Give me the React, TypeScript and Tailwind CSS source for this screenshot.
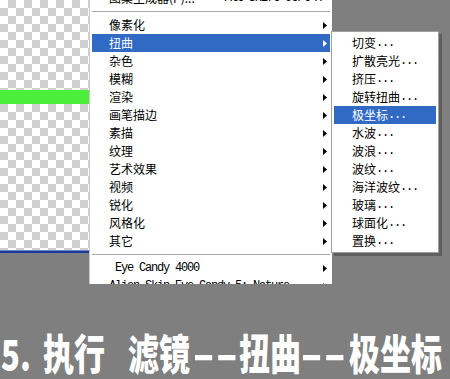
import React from "react"

const mainItems = [
  "像素化",
  "扭曲",
  "杂色",
  "模糊",
  "渲染",
  "画笔描边",
  "素描",
  "纹理",
  "艺术效果",
  "视频",
  "锐化",
  "风格化",
  "其它",
]

const subItems = [
  "切变",
  "扩散亮光",
  "挤压",
  "旋转扭曲",
  "极坐标",
  "水波",
  "波浪",
  "波纹",
  "海洋波纹",
  "玻璃",
  "球面化",
  "置换",
]

const Arrow = ({ white = false }: { white?: boolean }) => (
  <svg width="4" height="7" viewBox="0 0 4 7" className="shrink-0">
    <path d="M0 0 L4 3.5 L0 7 Z" fill={white ? "#ffffff" : "#000000"} />
  </svg>
)

const cjk = "font-['SimSun','Noto_Sans_CJK_SC',sans-serif]"
const mono = "font-['Liberation_Mono',monospace] tracking-[-1.2px]"

const Separator = () => (
  <div className="h-[9px] flex items-center">
    <div className="w-full border-t border-t-[#a8a8a8] border-b border-b-white" />
  </div>
)

const MainMenu = () => (
  <div className="relative w-[244px] h-[284px] shrink-0">
    <div className="w-full h-full overflow-hidden bg-white border-l border-l-[#c8c8c8] border-r border-r-[#808080]">
      <div className="-mt-[11px] px-[2px]">
        {/* item cut off by the top edge */}
        <div className={`h-[18px] flex items-center pl-[17px] pr-[3px] text-[12px] leading-none text-black ${cjk}`}>
          <span>图案生成器(P)...</span>
          <span className={`ml-[30px] ${mono}`}>Alt+Shift+Ctrl+X</span>
        </div>
        <Separator />
        {mainItems.map((item) => {
          const active = item === "扭曲"
          return (
            <div
              key={item}
              className={`h-[18px] flex items-center justify-between pl-[17px] pr-[3px] text-[12px] leading-none ${cjk} ${
                active ? "bg-[#316ac5] text-white" : "text-black"
              }`}
            >
              <span>{item}</span>
              <Arrow white={active} />
            </div>
          )
        })}
        <Separator />
        <div className="h-[18px] flex items-center justify-between pl-[23px] pr-[3px] text-[12px] leading-none text-black">
          <span className={mono}>Eye Candy 4000</span>
          <Arrow />
        </div>
        <div className="h-[18px] flex items-center justify-between pl-[17px] pr-[3px] text-[12px] leading-none text-black">
          <span className={mono}>Alien Skin Eye Candy 5: Nature</span>
          <Arrow />
        </div>
      </div>
    </div>

    {/* submenu of 扭曲 */}
    <div className="absolute left-[242px] top-[31px] w-[108px] h-[222px] bg-white border border-[#a0a0a0] pt-[2px] px-[2px] shadow-[3px_3px_0_rgba(0,0,0,0.25)]">
      {subItems.map((item) => {
        const active = item === "极坐标"
        return (
          <div
            key={item}
            className={`h-[18px] flex items-center pl-[18px] text-[12px] leading-none ${cjk} ${
              active ? "bg-[#316ac5] text-white" : "text-black"
            }`}
          >
            <span>{item}</span>
            <span className={mono}>...</span>
          </div>
        )
      })}
    </div>
  </div>
)

const Canvas = () => (
  <div className="w-[89px] shrink-0 flex flex-col">
    <div className="h-[250px] bg-[conic-gradient(#cfcfcf_25%,#ffffff_0_50%,#cfcfcf_0_75%,#ffffff_0)] bg-[length:16px_16px] pt-[90px]">
      <div className="h-[14px] bg-[#4cee3c]" />
    </div>
    <div className="h-[1px] bg-[#6f86c8]" />
    <div className="h-[2px] bg-[#1c3a9c]" />
  </div>
)

// the "--" between words is stretched wide in the picture
const Dashes = () => (
  <span className="w-[46px] shrink-0">
    <span className="inline-block origin-left scale-x-[1.95]">--</span>
  </span>
)

export default function App() {
  return (
    <div className="w-[450px] h-[379px] bg-[#7f7f7f] overflow-hidden flex flex-col">
      <div className="flex h-[300px]">
        <Canvas />
        <MainMenu />
      </div>
      <div className="mt-[31px] pl-[1px] flex items-center h-[31px] text-white text-[31px] font-black leading-none whitespace-nowrap font-['Noto_Sans_CJK_SC',sans-serif] scale-y-[1.35] origin-top">
        <span className="w-[42px] shrink-0">5.</span>
        <span className="w-[85px] shrink-0">执行</span>
        <span className="w-[64px] shrink-0">滤镜</span>
        <Dashes />
        <span className="w-[62px] shrink-0 pl-[1px]">扭曲</span>
        <Dashes />
        <span className="pl-[3px]">极坐标</span>
      </div>
    </div>
  )
}
